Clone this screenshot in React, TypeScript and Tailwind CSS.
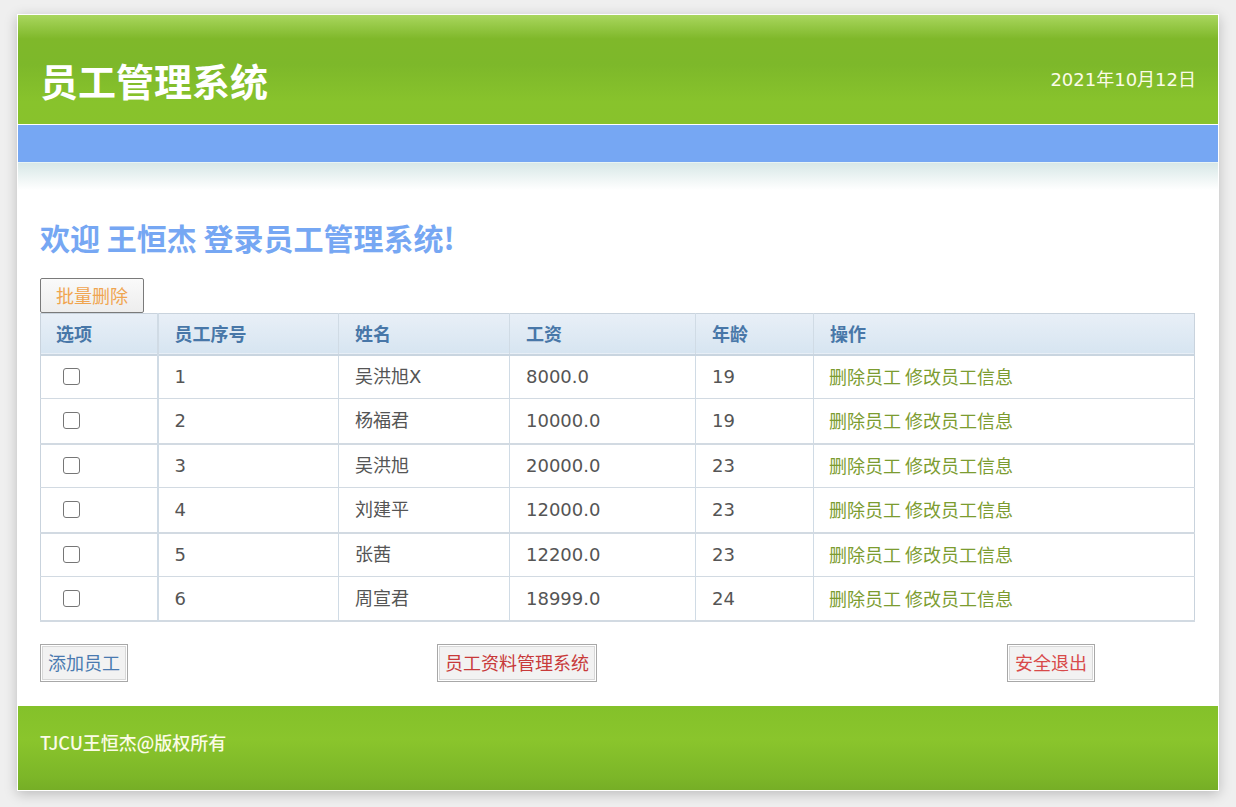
import React from "react";

interface Employee {
  id: number;
  name: string;
  salary: string;
  age: number;
}

const employees: Employee[] = [
  { id: 1, name: "吴洪旭X", salary: "8000.0", age: 19 },
  { id: 2, name: "杨福君", salary: "10000.0", age: 19 },
  { id: 3, name: "吴洪旭", salary: "20000.0", age: 23 },
  { id: 4, name: "刘建平", salary: "12000.0", age: 23 },
  { id: 5, name: "张茜", salary: "12200.0", age: 23 },
  { id: 6, name: "周宣君", salary: "18999.0", age: 24 },
];

// row heights taken from the screenshot
const rowH = ["h-[44px]", "h-[45px]", "h-[44px]", "h-[45px]", "h-[44px]", "h-[44px]"];

const cjk = "font-['Noto_Sans_CJK_SC','Noto_Sans',sans-serif]";
const body = "font-['DejaVu_Sans','Noto_Sans_CJK_SC',sans-serif]";

export default function App() {
  return (
    <div className={`min-h-[807px] bg-[#efefef] pt-[14px] ${cjk}`}>
      <div className="mx-auto w-[1202px] border border-white bg-white shadow-[0_3px_12px_rgba(0,0,0,0.22)]">
        {/* header */}
        <div className="h-[109px] flex items-center justify-between px-[22px] pt-[20px] bg-[linear-gradient(to_bottom,#a9d65e_0%,#7fb82a_22%,#7db82a_45%,#88c32c_80%,#88c22c_100%)]">
          <h1 className="text-[38px] font-bold text-white leading-none">员工管理系统</h1>
          <span className={`text-[18px] text-[#fbfbe8] ${body}`}>2021年10月12日</span>
        </div>
        <div className="h-[1px] bg-white" />
        <div className="h-[37px] bg-[#76a7f3]" />
        <div className="h-[1px] bg-[#e8f4f4]" />
        <div className="h-[27px] bg-[linear-gradient(to_bottom,#d8e8e7,#ffffff)]" />

        {/* content */}
        <div className="px-[22px]">
          <h2 className="mt-[26px] text-[30px] leading-[42px] font-bold text-[#76a7f3]">
            欢迎 王恒杰 登录员工管理系统!
          </h2>
          <button className="mt-[20px] h-[35px] px-[15px] rounded-[2px] border border-[#7a7a7a] bg-[linear-gradient(to_bottom,#fafafa,#ededed)] text-[18px] text-[#f0a550]">
            批量删除
          </button>

          <table className={`w-[1155px] border-collapse border border-[#c9d3dd] text-[18px] text-[#555] ${body}`}>
            <thead>
              <tr className="h-[41px] bg-[linear-gradient(to_bottom,#e8eff7,#d7e5f1)] text-left text-[#4877a8] border-b-2 border-[#c9d5e0]">
                <th className={`w-[117px] pl-[15px] font-bold ${cjk} border-r-2 border-[#d0dbe5]`}>选项</th>
                <th className={`w-[181px] pl-[16px] font-bold ${cjk} border-r border-[#d0dbe5]`}>员工序号</th>
                <th className={`w-[171px] pl-[16px] font-bold ${cjk} border-r border-[#d0dbe5]`}>姓名</th>
                <th className={`w-[186px] pl-[16px] font-bold ${cjk} border-r border-[#d0dbe5]`}>工资</th>
                <th className={`w-[118px] pl-[16px] font-bold ${cjk} border-r border-[#d0dbe5]`}>年龄</th>
                <th className={`pl-[16px] font-bold ${cjk}`}>操作</th>
              </tr>
            </thead>
            <tbody>
              {employees.map((e, i) => (
                <tr
                  key={e.id}
                  className={`${rowH[i]} ${i % 2 === 1 ? "border-b-2" : "border-b"} border-[#d2dae2]`}
                >
                  <td className="pl-[22px] border-r-2 border-[#d0dbe5]">
                    <span className="block w-[17px] h-[17px] rounded-[3px] border border-[#767676] bg-white" />
                  </td>
                  <td className="pl-[16px] border-r border-[#d0dbe5]">{e.id}</td>
                  <td className="pl-[16px] border-r border-[#d0dbe5]">{e.name}</td>
                  <td className="pl-[16px] border-r border-[#d0dbe5]">{e.salary}</td>
                  <td className="pl-[16px] border-r border-[#d0dbe5]">{e.age}</td>
                  <td className={`pl-[15px] text-[#7c9c30] ${cjk}`}>
                    <a>删除员工</a> <a>修改员工信息</a>
                  </td>
                </tr>
              ))}
            </tbody>
          </table>

          <div className="flex items-center mt-[22px] mb-[24px] text-[18px]">
            <button className="h-[38px] px-[7px] border border-[#a8a8a8] shadow-[inset_0_0_0_1px_#fff,inset_0_0_0_2px_#d8d8d8] bg-[#f2f2f2] text-[#4a7ab0]">
              添加员工
            </button>
            <button className="ml-[309px] h-[38px] px-[7px] border border-[#a8a8a8] shadow-[inset_0_0_0_1px_#fff,inset_0_0_0_2px_#d8d8d8] bg-[#f2f2f2] text-[#c83a3a]">
              员工资料管理系统
            </button>
            <button className="ml-[410px] h-[38px] px-[7px] border border-[#a8a8a8] shadow-[inset_0_0_0_1px_#fff,inset_0_0_0_2px_#d8d8d8] bg-[#f2f2f2] text-[#d84a4a]">
              安全退出
            </button>
          </div>
        </div>

        {/* footer */}
        <div className="h-[84px] flex items-center px-[22px] pb-[10px] bg-[linear-gradient(to_bottom,#84c12a_0%,#8ac52c_40%,#7cb628_85%,#76ae26_100%)]">
          <span className="text-[18px] font-medium text-[#fbfbe6]">TJCU王恒杰@版权所有</span>
        </div>
      </div>
    </div>
  );
}
